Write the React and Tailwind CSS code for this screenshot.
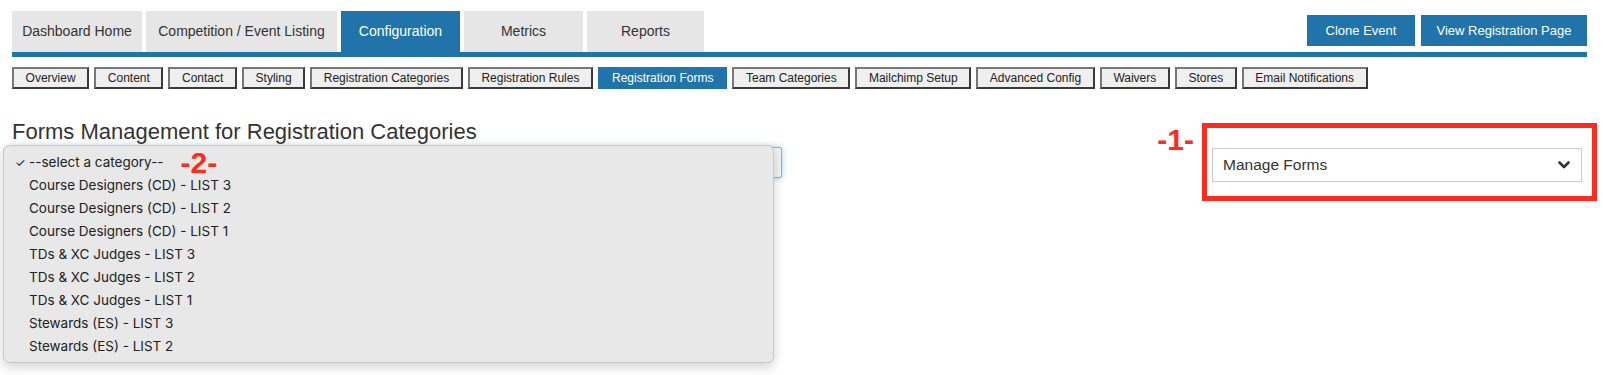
import React from "react";

const TOP_TABS = [
  { label: "Dashboard Home", w: "w-[130px]" },
  { label: "Competition / Event Listing", w: "w-[191px]" },
  { label: "Configuration", w: "w-[119px]", active: true },
  { label: "Metrics", w: "w-[119px]" },
  { label: "Reports", w: "w-[117px]" },
];

const SUB_TABS = [
  "Overview",
  "Content",
  "Contact",
  "Styling",
  "Registration Categories",
  "Registration Rules",
  "Registration Forms",
  "Team Categories",
  "Mailchimp Setup",
  "Advanced Config",
  "Waivers",
  "Stores",
  "Email Notifications",
];

const OPTIONS = [
  "Course Designers (CD) - LIST 3",
  "Course Designers (CD) - LIST 2",
  "Course Designers (CD) - LIST 1",
  "TDs & XC Judges - LIST 3",
  "TDs & XC Judges - LIST 2",
  "TDs & XC Judges - LIST 1",
  "Stewards (ES) - LIST 3",
  "Stewards (ES) - LIST 2",
];

export default function App() {
  return (
    <div className="min-h-[375px] bg-white font-['Liberation_Sans',Arial,sans-serif] text-[#333]">
      {/* Main nav */}
      <div className="pl-[12px] pr-[16px] pt-[11px]">
        <div className="flex items-center justify-between">
          <div className="flex gap-[4px]">
            {TOP_TABS.map((t) => (
              <div
                key={t.label}
                className={`${t.w} h-[41px] flex items-center justify-center text-[14px] ${
                  t.active ? "bg-[#2174aa] text-white" : "bg-[#e6e6e6] text-[#333]"
                }`}
              >
                {t.label}
              </div>
            ))}
          </div>
          <div className="flex gap-[6px] -mt-[2px]">
            <button className="w-[108px] h-[31px] bg-[#2174aa] text-white text-[13px]">Clone Event</button>
            <button className="w-[166px] h-[31px] bg-[#2174aa] text-white text-[13px]">View Registration Page</button>
          </div>
        </div>
        <div className="h-[5px] bg-[#2174aa]" />

        {/* Sub nav */}
        <div className="mt-[10px] flex gap-[5px]">
          {SUB_TABS.map((s) =>
            s === "Registration Forms" ? (
              <div key={s} className="h-[22px] px-[14px] flex items-center bg-[#2174aa] text-white text-[12px]">
                {s}
              </div>
            ) : (
              <div
                key={s}
                className="h-[22px] px-[11.6px] flex items-center bg-[#efefef] text-[#222] text-[12px] border-2 border-t-[#777] border-l-[#777] border-r-[#3a3a3a] border-b-[#3a3a3a]"
              >
                {s}
              </div>
            )
          )}
        </div>
      </div>

      {/* Content */}
      <div className="mt-[31px] flex justify-between pl-[12px] pr-[6px]">
        <div className="relative w-[770px]">
          <h2 className="text-[22px] leading-[24px] text-[#333]">Forms Management for Registration Categories</h2>
          <div className="mt-[3px] h-[31px] w-full border border-[#a9a9a9] bg-[#f2f2f2] rounded-[2px] shadow-[0_0_6px_rgba(102,175,233,0.6)]" />

          {/* open select popup */}
          <div className="absolute left-[-9px] top-[25px] w-[771px] pt-[5px] pb-[4px] bg-[#e8e8e8] border border-[#c9c9c9] rounded-[6px] shadow-[0_4px_12px_rgba(0,0,0,0.18)] font-['Inter',sans-serif] text-[13.5px] text-[#222]">
            <div className="h-[23px] flex items-center">
              <span className="w-[25px] pl-[11px] text-[12px]">✓</span>
              <span>--select a category--</span>
              <span className="ml-[17px] text-[30px] leading-none font-bold text-[#fe2b1f] font-['Liberation_Sans',Arial,sans-serif]">
                -2-
              </span>
            </div>
            {OPTIONS.map((o) => (
              <div key={o} className="h-[23px] flex items-center pl-[25px]">
                {o}
              </div>
            ))}
          </div>
        </div>

        <div className="flex items-start gap-[8px]">
          <span className="mt-[5px] text-[30px] leading-none font-bold text-[#fe2b1f]">-1-</span>
          <div className="mt-[3px] w-[395px] border-[5px] border-[#fe2b1f] pl-[5px] pr-[10px] pt-[20px] pb-[14px]">
            <div className="h-[34px] border border-[#ccc] flex items-center justify-between pl-[10px] pr-[11px] text-[15.5px] text-[#333]">
              <span>Manage Forms</span>
              <svg width="12" height="8" viewBox="0 0 12 8" fill="none">
                <path d="M1.5 1.5 L6 6 L10.5 1.5" stroke="#333" strokeWidth="2.6" strokeLinecap="round" strokeLinejoin="round" />
              </svg>
            </div>
          </div>
        </div>
      </div>
    </div>
  );
}
